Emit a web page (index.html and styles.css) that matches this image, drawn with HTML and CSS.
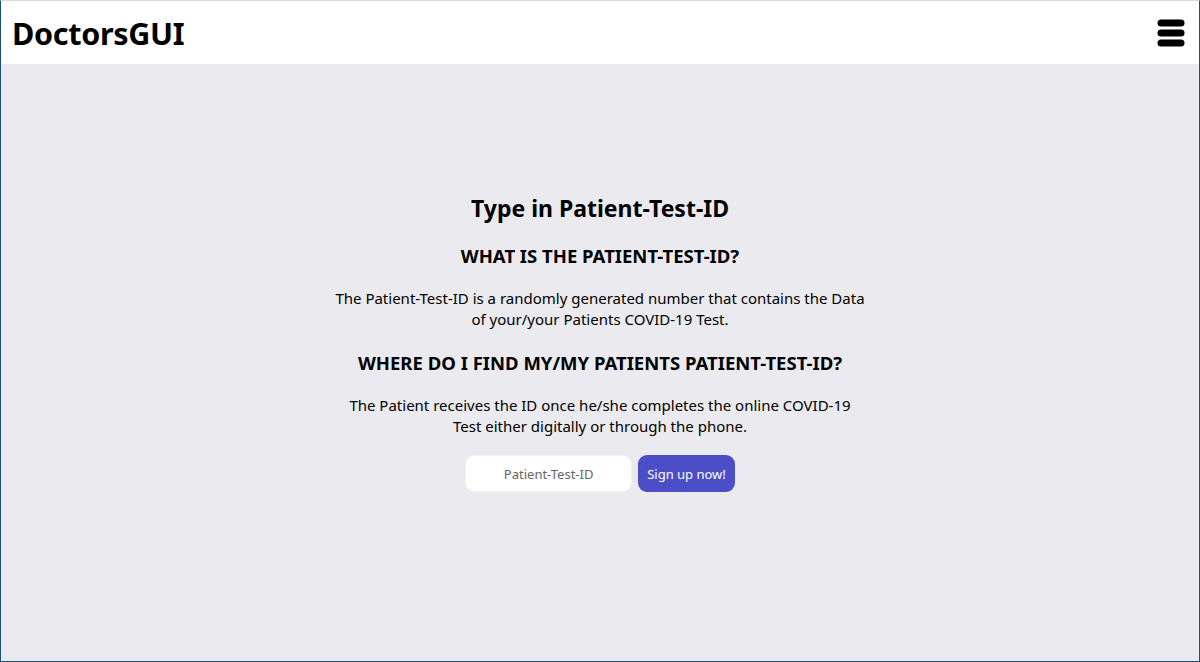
FILE: index.html
```html
<!DOCTYPE html>
<html lang="en">
<head>
<meta charset="utf-8">
<title>DoctorsGUI</title>
<link rel="stylesheet" href="styles.css">
</head>
<body>
<div class="frame">
  <header class="topbar">
    <h1 class="brand">DoctorsGUI</h1>
    <button class="menu" aria-label="Menu">
      <svg width="28" height="28" viewBox="0 0 28 28">
        <rect x="0.5" y="0.5" width="27" height="7" rx="3.5" fill="#000"/>
        <rect x="0.5" y="10.5" width="27" height="7" rx="3.5" fill="#000"/>
        <rect x="0.5" y="20.5" width="27" height="7" rx="3.5" fill="#000"/>
      </svg>
    </button>
  </header>
  <main class="content">
    <section class="panel">
      <h2 class="title">Type in Patient-Test-ID</h2>
      <h3 class="question">WHAT IS THE PATIENT-TEST-ID?</h3>
      <p class="answer">The Patient-Test-ID is a randomly generated number that contains the Data of your/your Patients COVID-19 Test.</p>
      <h3 class="question">WHERE DO I FIND MY/MY PATIENTS PATIENT-TEST-ID?</h3>
      <p class="answer">The Patient receives the ID once he/she completes the online COVID-19 Test either digitally or through the phone.</p>
      <form class="idform">
        <input class="idinput" type="text" placeholder="Patient-Test-ID">
        <button class="submit" type="button">Sign up now!</button>
      </form>
    </section>
  </main>
</div>
</body>
</html>
```

FILE: styles.css
```css
* { box-sizing: border-box; }
html, body { margin: 0; padding: 0; height: 100%; }
body {
  font-family: "Noto Sans", "Open Sans", sans-serif;
  color: #000;
  background: #ebebef;
}
.frame {
  height: 662px;
  display: flex;
  flex-direction: column;
  border-top: 1px solid #d9d9d9;
  border-left: 1px solid #1a5276;
  border-right: 1px solid #1a5276;
  border-bottom: 1px solid #1a5276;
  background: #ebebef;
}
.topbar {
  height: 63px;
  background: #fff;
  display: flex;
  align-items: center;
  justify-content: space-between;
  padding: 0 14px 0 11px;
  flex-shrink: 0;
}
.brand {
  margin: 0;
  font-size: 30.5px;
  font-weight: 700;
  letter-spacing: -0.3px;
}
.menu {
  border: 0;
  background: none;
  padding: 0;
  width: 28px;
  height: 28px;
  display: block;
}
.menu svg { display: block; }
.content {
  flex: 1;
  display: flex;
  justify-content: center;
  padding-top: 128px;
}
.panel {
  width: 532px;
  text-align: center;
}
.title {
  margin: 0 0 20px;
  font-size: 23px;
  font-weight: 700;
  line-height: 32px;
}
.question {
  margin: 0 0 20px;
  font-size: 18.5px;
  font-weight: 700;
  line-height: 24px;
}
.answer {
  margin: 0;
  font-size: 15px;
  line-height: 21px;
}
.answer + .question { margin-top: 21px; }
.idform {
  display: flex;
  justify-content: center;
  align-items: stretch;
  gap: 6px;
  margin-top: 18px;
}
.idinput {
  width: 167px;
  height: 37px;
  margin: 0;
  border: 1px solid #f2f2f2;
  border-radius: 9px;
  background: #fff;
  text-align: center;
  font-family: inherit;
  font-size: 13px;
  color: #333;
  outline: none;
}
.idinput::placeholder { color: #666; }
.submit {
  height: 37px;
  margin: 0;
  padding: 0 9px;
  border: 0;
  border-radius: 9px;
  background: #4b4ec6;
  color: #fff;
  font-family: inherit;
  font-size: 13px;
}
```
